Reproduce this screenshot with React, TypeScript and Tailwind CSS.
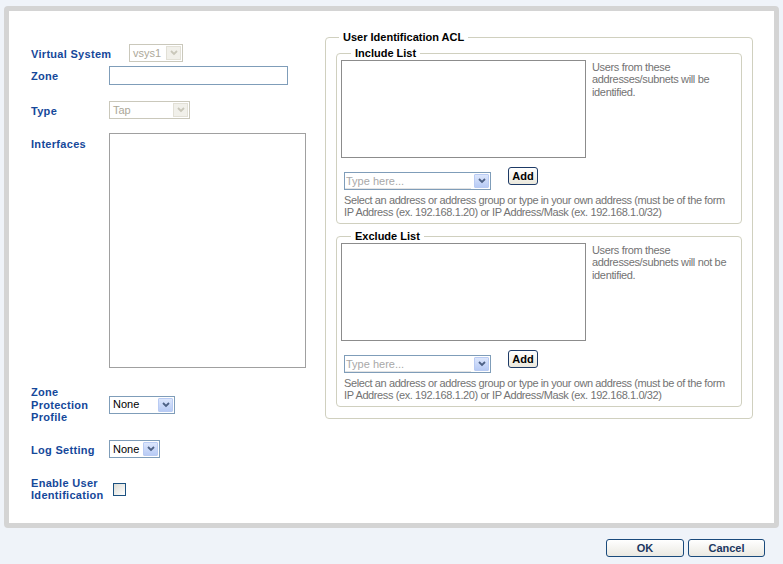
import React from "react";

const font = { fontFamily: '"Liberation Sans", Arial, sans-serif' };

function Chevron({ color = "#4d6185" }: { color?: string }) {
  return (
    <svg width="8" height="6" viewBox="0 0 8 6">
      <path d="M1 1 L4 4 L7 1" fill="none" stroke={color} strokeWidth="1.8" />
    </svg>
  );
}

function ArrowBox({ disabled }: { disabled?: boolean }) {
  return disabled ? (
    <div className="flex h-[14px] w-[15px] items-center justify-center border border-[#e2e0d6] bg-[#f1f0ea]">
      <Chevron color="#c9c7ba" />
    </div>
  ) : (
    <div className="flex h-[14px] w-[15px] items-center justify-center rounded-[1px] border border-[#b9cbf3] bg-gradient-to-b from-[#dce6fc] to-[#b8cbf5]">
      <Chevron />
    </div>
  );
}

function Select({ value, width, disabled }: { value: string; width: string; disabled?: boolean }) {
  return (
    <div
      className={`flex h-[18px] items-center justify-between border pl-[3px] pr-[1px] text-[11px] ${width} ${
        disabled ? "border-[#cac8bb] text-[#aca899]" : "border-[#7f9db9] text-black"
      }`}
    >
      <span className="leading-none">{value}</span>
      <ArrowBox disabled={disabled} />
    </div>
  );
}

function Label({ children, className = "" }: { children: React.ReactNode; className?: string }) {
  return (
    <div className={`text-[11px] font-bold leading-[12.5px] tracking-[0.3px] text-[#15489a] ${className}`}>
      {children}
    </div>
  );
}

function AddRow() {
  return (
    <div className="flex items-start">
      <div className="ml-[3px] mt-[14px] flex h-[18px] w-[147px] items-center justify-between border border-[#7f9db9] pr-[1px]">
        <div className="h-full w-[126px] border-b border-[#e3e3e3] pl-[1px] text-[11px] leading-[16px] text-[#a8a8a8]">
          Type here...
        </div>
        <ArrowBox />
      </div>
      <button className="ml-[17px] mt-[9px] h-[18px] w-[30px] rounded-[3px] border border-[#1d3a66] bg-gradient-to-b from-white to-[#ebe8dc] text-[11px] font-bold leading-none text-black">
        Add
      </button>
    </div>
  );
}

function ListBlock({ title, help }: { title: string; help: string }) {
  return (
    <fieldset className="min-w-0 rounded-[4px] border border-[#d0d0bf] pb-[5px] pl-[4px] pr-[4px]">
      <legend className="ml-[10px] px-[4px] text-[11px] font-bold leading-[13px] text-black">{title}</legend>
      <div className="flex items-start">
        <div className="h-[98px] w-[245px] shrink-0 border border-[#8c8c8c] bg-white" />
        <div className="ml-[6px] mt-[1px] whitespace-nowrap text-[11px] leading-[12.3px] tracking-[-0.35px] text-[#737373]">
          Users from these
          <br />
          {help}
          <br />
          identified.
        </div>
      </div>
      <AddRow />
      <div className="ml-[3px] mt-[4px] whitespace-nowrap text-[11px] leading-[12px] tracking-[-0.4px] text-[#737373]">
        Select an address or address group or type in your own address (must be of the form
        <br />
        IP Address (ex. 192.168.1.20) or IP Address/Mask (ex. 192.168.1.0/32)
      </div>
    </fieldset>
  );
}

export default function App() {
  return (
    <div className="h-[564px] w-[783px] overflow-hidden bg-[#eff3f9] pl-[4px] pt-[6px]" style={font}>
      <div className="flex h-[522px] w-[775px] rounded-[4px] border-[5px] border-[#d4d4d4] bg-white">
        {/* left column */}
        <div className="flex w-[316px] shrink-0 flex-col pl-[22px]">
          <div className="mt-[33px] flex h-[18px] items-center">
            <Label className="w-[98px] whitespace-nowrap pt-[2px]">Virtual System</Label>
            <Select value="vsys1" width="w-[54px]" disabled />
          </div>
          <div className="mt-[4px] flex h-[19px] items-center">
            <Label className="w-[78px] pt-[1px]">Zone</Label>
            <div className="h-[19px] w-[179px] border border-[#7f9db9]" />
          </div>
          <div className="mt-[16px] flex h-[18px] items-center">
            <Label className="w-[78px] pt-[2px]">Type</Label>
            <Select value="Tap" width="w-[81px]" disabled />
          </div>
          <div className="mt-[14px] flex items-start">
            <Label className="mt-[5px] w-[78px]">Interfaces</Label>
            <div className="h-[235px] w-[197px] border border-[#a0a0a0]" />
          </div>
          <div className="mt-[18px] flex items-center">
            <Label className="w-[78px]">
              Zone
              <br />
              Protection
              <br />
              Profile
            </Label>
            <Select value="None" width="w-[66px]" />
          </div>
          <div className="mt-[16px] flex h-[19px] items-center">
            <Label className="w-[78px] whitespace-nowrap pt-[2px]">Log Setting</Label>
            <Select value="None" width="w-[51px]" />
          </div>
          <div className="mt-[18px] flex items-center">
            <Label className="w-[82px] whitespace-nowrap">
              Enable User
              <br />
              Identification
            </Label>
            <div className="h-[13px] w-[13px] border border-[#1c5180] bg-gradient-to-br from-[#dcdcd5] to-white" />
          </div>
        </div>

        {/* right column */}
        <div className="pt-[20px]">
          <fieldset className="w-[428px] min-w-0 rounded-[4px] border border-[#d0d0bf] pb-[11px] pl-[10px] pr-[10px]">
            <legend className="ml-[3px] px-[4px] text-[11px] font-bold leading-[13px] text-black">
              User Identification ACL
            </legend>
            <div className="mt-[3px] flex flex-col gap-[6px]">
              <ListBlock title="Include List" help="addresses/subnets will be" />
              <ListBlock title="Exclude List" help="addresses/subnets will not be" />
            </div>
          </fieldset>
        </div>
      </div>

      <div className="mt-[11px] flex justify-end gap-[4px] pr-[18px]">
        <button className="h-[18px] w-[78px] rounded-[3px] border border-[#1a4a7c] bg-gradient-to-b from-white to-[#ebe9e2] text-[11px] font-bold leading-none text-[#1b3760]">
          OK
        </button>
        <button className="h-[18px] w-[77px] rounded-[3px] border border-[#1a4a7c] bg-gradient-to-b from-white to-[#ebe9e2] text-[11px] font-bold leading-none text-[#1b3760]">
          Cancel
        </button>
      </div>
    </div>
  );
}
